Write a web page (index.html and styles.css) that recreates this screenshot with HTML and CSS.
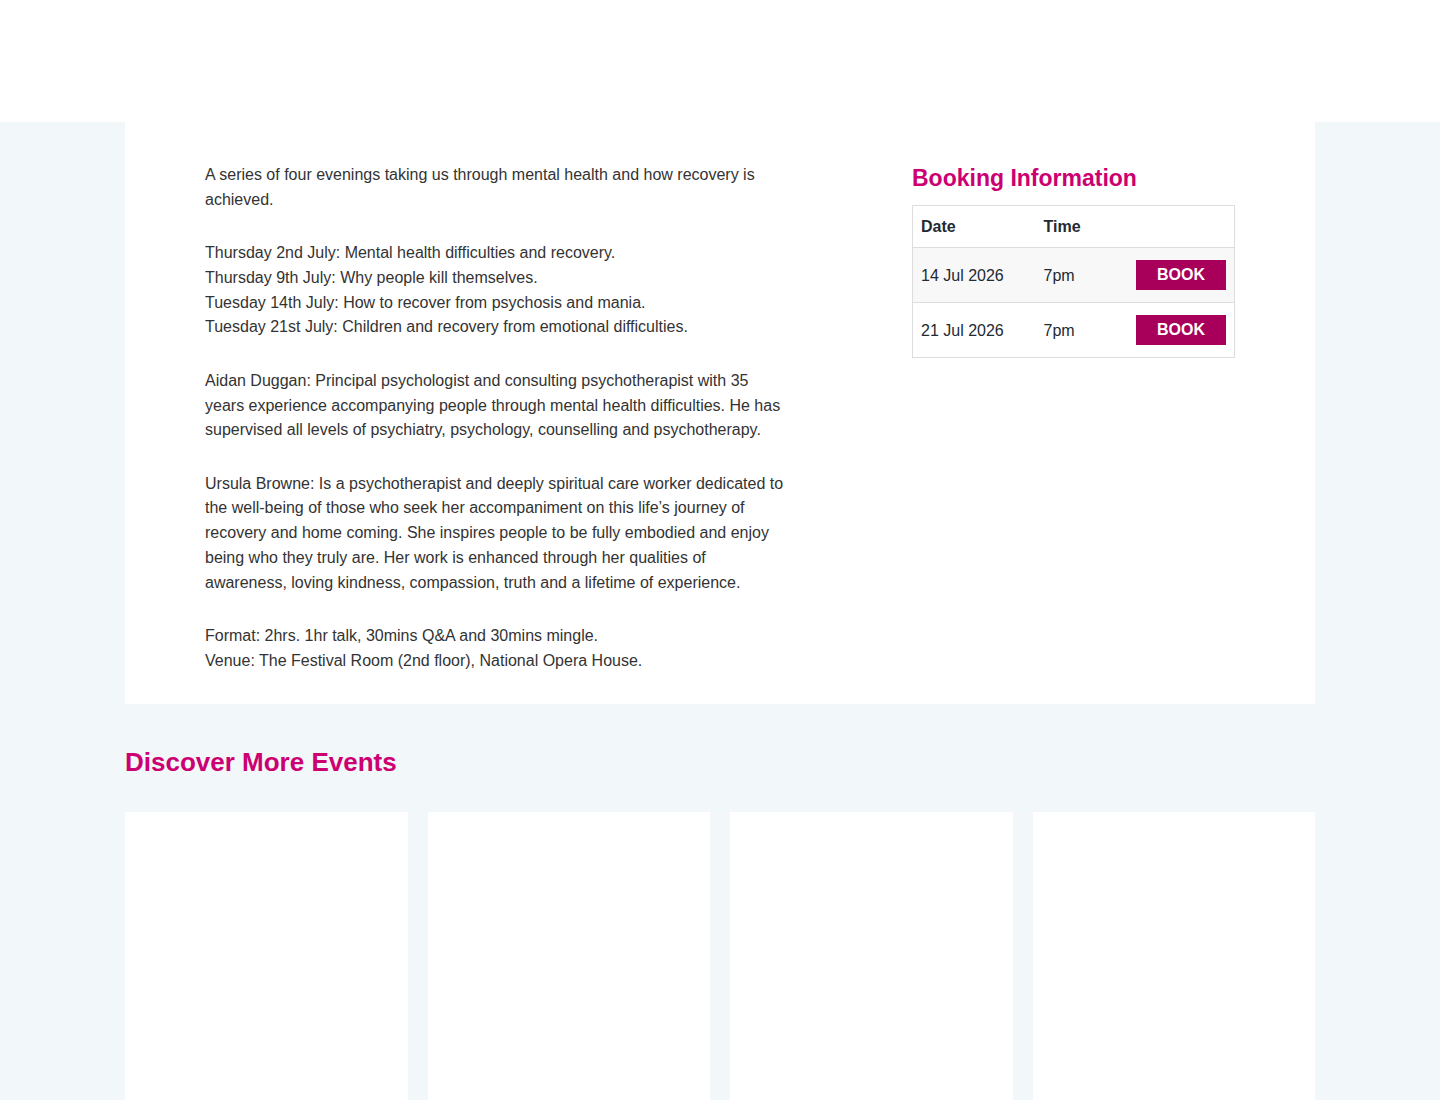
FILE: index.html
```html
<!DOCTYPE html>
<html lang="en">
<head>
<meta charset="utf-8">
<title>Event</title>
<link rel="stylesheet" href="styles.css">
</head>
<body>
<header class="site-header"></header>
<main class="page">
  <section class="event">
    <div class="event-body">
      <p>A series of four evenings taking us through mental health and how recovery is achieved.</p>
      <p>Thursday 2nd July: Mental health difficulties and recovery.<br>Thursday 9th July: Why people kill themselves.<br>Tuesday 14th July: How to recover from psychosis and mania.<br>Tuesday 21st July: Children and recovery from emotional difficulties.</p>
      <p>Aidan Duggan: Principal psychologist and consulting psychotherapist with 35 years experience accompanying people through mental health difficulties. He has supervised all levels of psychiatry, psychology, counselling and psychotherapy.</p>
      <p>Ursula Browne: Is a psychotherapist and deeply spiritual care worker dedicated to the well-being of those who seek her accompaniment on this life’s journey of recovery and home coming. She inspires people to be fully embodied and enjoy being who they truly are. Her work is enhanced through her qualities of awareness, loving kindness, compassion, truth and a lifetime of experience.</p>
      <p>Format: 2hrs. 1hr talk, 30mins Q&amp;A and 30mins mingle.<br>Venue: The Festival Room (2nd floor), National Opera House.</p>
    </div>
    <aside class="booking">
      <h2 class="booking-title">Booking Information</h2>
      <table class="booking-table">
        <thead>
          <tr><th class="col-date">Date</th><th class="col-time">Time</th><th></th></tr>
        </thead>
        <tbody>
          <tr class="alt"><td>14 Jul 2026</td><td>7pm</td><td class="col-btn"><a class="btn-book" href="#">BOOK</a></td></tr>
          <tr><td>21 Jul 2026</td><td>7pm</td><td class="col-btn"><a class="btn-book" href="#">BOOK</a></td></tr>
        </tbody>
      </table>
    </aside>
  </section>
  <section class="discover">
    <h2 class="discover-title">Discover More Events</h2>
    <div class="cards">
      <div class="card"></div>
      <div class="card"></div>
      <div class="card"></div>
      <div class="card"></div>
    </div>
  </section>
</main>
</body>
</html>
```
FILE: styles.css
```css
* { box-sizing: border-box; }
html, body { margin: 0; padding: 0; }
body {
  background: #f2f7fa;
  font-family: "Liberation Sans", Arial, sans-serif;
  color: #333333;
  font-size: 16px;
}
.site-header {
  height: 122px;
  background: #ffffff;
}
.page {
  width: 1190px;
  margin: 0 auto;
}
.event {
  background: #ffffff;
  padding: 41px 80px 30px;
  display: grid;
  grid-template-columns: 582px 323px;
  justify-content: space-between;
  align-items: start;
}
.event-body p {
  margin: 0 0 28.5px;
  line-height: 24.8px;
}
.event-body p:last-child { margin-bottom: 0; }
.booking-title {
  margin: 1px 0 13px;
  font-size: 23px;
  line-height: 28px;
  font-weight: bold;
  color: #cc0070;
}
.booking-table {
  width: 323px;
  border-collapse: collapse;
  border: 1px solid #dddddd;
  color: #222a33;
}
.booking-table th,
.booking-table td {
  text-align: left;
  padding: 0 8px;
  font-size: 16px;
  line-height: 20px;
}
.booking-table th {
  height: 42px;
  font-weight: bold;
}
.booking-table td {
  height: 55px;
  padding-top: 1px;
  border-top: 1px solid #dddddd;
}
.booking-table .col-date { width: 123px; }
.booking-table .col-time { width: 80px; }
.booking-table tr.alt td { background: #f8f8f8; }
.col-btn { text-align: right !important; }
.btn-book {
  display: inline-block;
  width: 90px;
  height: 30px;
  line-height: 30px;
  margin-bottom: 2px;
  text-align: center;
  background: #a8005a;
  color: #ffffff;
  font-weight: bold;
  text-decoration: none;
  vertical-align: middle;
}
.discover {
  padding-top: 41px;
}
.discover-title {
  margin: 0 0 33px;
  font-size: 26px;
  line-height: 34px;
  font-weight: bold;
  color: #cc0070;
}
.cards {
  display: grid;
  grid-template-columns: repeat(4, 1fr);
  gap: 20px;
}
.card {
  background: #ffffff;
  height: 320px;
}
```
